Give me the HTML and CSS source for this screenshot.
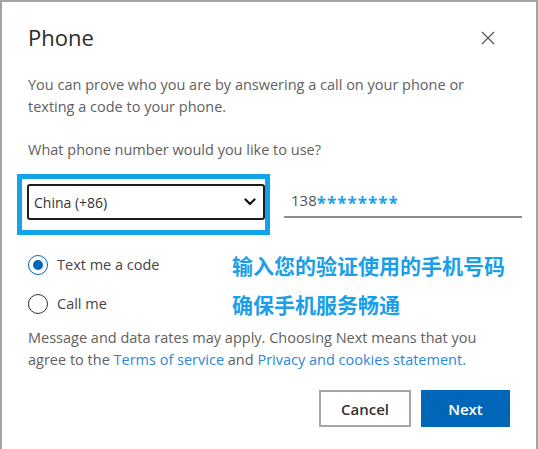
FILE: index.html
```html
<!DOCTYPE html>
<html lang="en">
<head>
<meta charset="utf-8">
<title>Phone</title>
<link rel="stylesheet" href="styles.css">
</head>
<body>
<div class="dialog">
  <div class="header">
    <h1 class="title">Phone</h1>
    <button class="close" aria-label="Close">
      <svg width="14" height="14" viewBox="0 0 14 14"><path d="M1 1 L13 13 M13 1 L1 13" stroke="#555" stroke-width="1.2" fill="none"/></svg>
    </button>
  </div>
  <p class="desc">You can prove who you are by answering a call on your phone or<br>texting a code to your phone.</p>
  <p class="question">What phone number would you like to use?</p>
  <div class="phone-row">
    <div class="highlight">
      <div class="select">
        <span>China (+86)</span>
        <svg width="12" height="8" viewBox="0 0 12 8"><path d="M1.5 1.5 L6 6 L10.5 1.5" stroke="#111" stroke-width="2.2" fill="none" stroke-linecap="round" stroke-linejoin="round"/></svg>
      </div>
    </div>
    <div class="number"><span class="digits">138</span><span class="stars">********</span></div>
  </div>
  <div class="options">
    <label class="radio"><span class="dot checked"></span>Text me a code</label>
    <div class="note">输入您的验证使用的手机号码</div>
    <label class="radio"><span class="dot"></span>Call me</label>
    <div class="note">确保手机服务畅通</div>
  </div>
  <p class="legal">Message and data rates may apply. Choosing Next means that you<br>agree to the <a href="#">Terms of service</a> and <a href="#">Privacy and cookies statement.</a></p>
  <div class="actions">
    <button class="btn cancel">Cancel</button>
    <button class="btn next">Next</button>
  </div>
</div>
</body>
</html>
```

FILE: styles.css
```css
html, body {
  margin: 0;
  padding: 0;
  background: #fff;
}
body {
  font-family: "Open Sans", "Noto Sans", "Liberation Sans", sans-serif;
  color: #616161;
}
.dialog {
  box-sizing: border-box;
  width: 538px;
  height: 449px;
  border: 2px solid #a3a3a3;
  border-bottom: none;
  padding: 20px 26px 0 26px;
}
.header {
  display: flex;
  justify-content: space-between;
  align-items: flex-start;
}
.title {
  margin: 0;
  font-size: 22px;
  line-height: 30px;
  font-weight: 400;
  color: #2b2b2b;
}
.close {
  border: none;
  background: none;
  padding: 0;
  margin: 9px 15px 0 0;
  width: 14px;
  height: 14px;
  display: flex;
}
.desc, .question, .legal {
  margin: 0;
  font-size: 14.5px;
  line-height: 22px;
}
.desc { margin-top: 22px; }
.question { margin-top: 21px; }
.phone-row {
  margin-top: 13px;
  margin-left: -11px;
  display: flex;
  align-items: flex-start;
  gap: 14px;
}
.highlight {
  flex-shrink: 0;
  border: 5px solid #13a3e9;
  padding: 5px 0 10px 5px;
}
.select {
  box-sizing: border-box;
  width: 238px;
  height: 36px;
  border: 2px solid #1b1b1b;
  border-radius: 3px;
  display: flex;
  align-items: center;
  justify-content: space-between;
  padding: 0 7px 0 5px;
  font-size: 14px;
  color: #333;
}
.number {
  flex-shrink: 0;
  box-sizing: border-box;
  width: 238px;
  height: 42px;
  margin-top: 2px;
  border-bottom: 2px solid #8c8c8c;
  padding: 14px 0 0 7px;
  font-size: 15px;
  line-height: 20px;
  color: #555;
}
.stars {
  color: #1a9fe8;
  font-weight: 700;
  font-size: 17px;
  letter-spacing: 1px;
  vertical-align: -4px;
}
.options {
  margin-top: 10px;
  display: grid;
  grid-template-columns: 204px auto;
  grid-auto-rows: 39px;
  align-items: center;
}
.radio {
  display: flex;
  align-items: center;
  gap: 9px;
  font-size: 14.5px;
  color: #444;
}
.dot {
  box-sizing: border-box;
  width: 20px;
  height: 20px;
  border: 1.5px solid #333;
  border-radius: 50%;
  display: flex;
  align-items: center;
  justify-content: center;
}
.dot.checked {
  border-color: #0067b8;
}
.dot.checked::after {
  content: "";
  width: 10px;
  height: 10px;
  border-radius: 50%;
  background: #0067b8;
}
.note {
  font-family: "Noto Sans CJK SC", sans-serif;
  font-weight: 700;
  font-size: 21px;
  color: #1a9fe8;
  line-height: 28px;
}
.legal { margin-top: 4px; }
.legal a {
  color: #2b88d8;
  text-decoration: none;
}
.actions {
  margin-top: 19px;
  display: flex;
  justify-content: flex-end;
  gap: 10px;
}
.btn {
  box-sizing: border-box;
  height: 37px;
  font-family: inherit;
  font-size: 15px;
  font-weight: 600;
  border-radius: 0;
  cursor: pointer;
}
.cancel {
  width: 92px;
  background: #fff;
  border: 2px solid #a6a6a6;
  color: #333;
}
.next {
  width: 89px;
  background: #0067b8;
  border: none;
  color: #fff;
}
```
